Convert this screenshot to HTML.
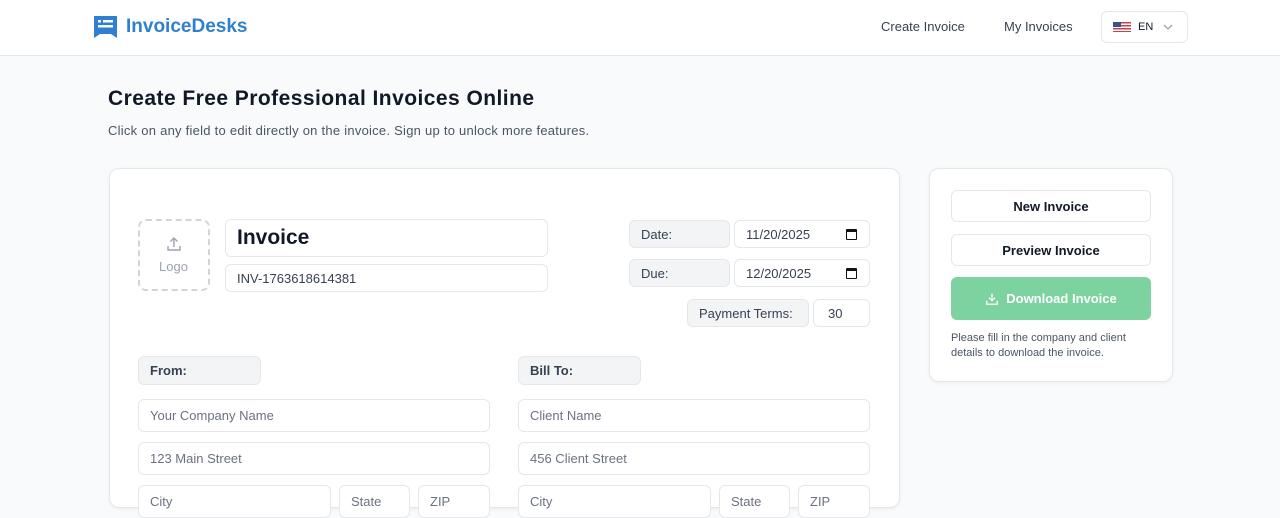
<!DOCTYPE html><html><head><style>
*{box-sizing:border-box;margin:0;padding:0}
body{width:1280px;height:500px;overflow:hidden;background:#f9fafb;font-family:"Liberation Sans",sans-serif;color:#111827;position:relative}
.a{position:absolute}
.hdr{left:0;top:0;width:1280px;height:56px;background:#fff;border-bottom:1px solid #e5e7eb}
.f{position:absolute;border:1px solid #e5e7eb;border-radius:6px;background:#fff;font-size:13px;color:#374151;padding-left:11px;display:flex;align-items:center}
.g{position:absolute;background:#f3f4f6;border:1px solid #e5e7eb;border-radius:6px;font-size:13px;font-weight:bold;color:#374151;padding-left:11px;display:flex;align-items:center}
.ph{color:#6b7280}
.btn{position:absolute;left:951px;width:200px;height:32px;border:1px solid #e5e7eb;border-radius:6px;background:#fff;font-size:13px;font-weight:bold;display:flex;align-items:center;justify-content:center;color:#111827}
</style></head><body>
<div class="a hdr"></div>
<svg class="a" style="left:94px;top:16px" width="23" height="22" viewBox="0 0 23 22"><path d="M0 0h23v22l-6-4H6l-6 4z" fill="#2f80d1"/><rect x="4" y="4" width="3" height="2.5" fill="#fff"/><rect x="9" y="4" width="10" height="2.5" fill="#fff"/><rect x="4" y="9" width="15" height="2.5" fill="#fff"/></svg>
<div class="a" style="left:126px;top:16px;font-size:19px;font-weight:bold;color:#2f80d1">InvoiceDesks</div>
<div class="a" style="left:881px;top:19px;font-size:13px;color:#374151">Create Invoice</div>
<div class="a" style="left:1004px;top:19px;font-size:13px;color:#374151">My Invoices</div>
<div class="a" style="left:1101px;top:11px;width:87px;height:32px;border:1px solid #e5e7eb;border-radius:6px;background:#fff"></div>
<div class="a" style="left:1113px;top:22px;width:18px;height:10px;background:repeating-linear-gradient(#c8404c 0 1.5px,#fff 1.5px 3px)"><div style="width:8px;height:5px;background:#3c4f8f"></div></div>
<div class="a" style="left:1138px;top:21px;font-size:11px;color:#111827">EN</div>
<svg class="a" style="left:1163px;top:24px" width="10" height="7"><path d="M1 1l4 4 4-4" stroke="#9ca3af" fill="none" stroke-width="1.3"/></svg>
<div class="a" style="left:108px;top:87px;font-size:21px;font-weight:bold;letter-spacing:0.45px">Create Free Professional Invoices Online</div>
<div class="a" style="left:108px;top:123px;font-size:13px;color:#4b5563;letter-spacing:0.25px">Click on any field to edit directly on the invoice. Sign up to unlock more features.</div>
<div class="a" style="left:109px;top:168px;width:791px;height:340px;background:#fff;border:1px solid #e5e7eb;border-radius:10px;box-shadow:0 1px 3px rgba(0,0,0,.06)"></div>
<div class="a" style="left:929px;top:168px;width:244px;height:214px;background:#fff;border:1px solid #e5e7eb;border-radius:10px;box-shadow:0 1px 3px rgba(0,0,0,.06)"></div>
<div class="a" style="left:138px;top:219px;width:72px;height:72px;border:2px dashed #d1d5db;border-radius:8px"></div>
<svg class="a" style="left:166px;top:236px" width="16" height="16" viewBox="0 0 16 16" fill="none" stroke="#9ca3af" stroke-width="1.4"><path d="M8 11V2M4.5 5.5L8 2l3.5 3.5M2 10v4h12v-4"/></svg>
<div class="a" style="left:159px;top:259px;font-size:13px;color:#9ca3af">Logo</div>
<div class="f" style="left:225px;top:219px;width:323px;height:38px;font-size:21px;font-weight:bold;color:#111827">Invoice</div>
<div class="f" style="left:225px;top:264px;width:323px;height:28px">INV-1763618614381</div>
<div class="g" style="left:629px;top:220px;width:101px;height:28px;font-weight:normal">Date:</div>
<div class="f" style="left:734px;top:220px;width:136px;height:28px">11/20/2025<span style="position:absolute;right:12px;width:11px;height:11px;border:1.5px solid #111;border-top-width:3px;border-radius:1px"></span></div>
<div class="g" style="left:629px;top:259px;width:101px;height:28px;font-weight:normal">Due:</div>
<div class="f" style="left:734px;top:259px;width:136px;height:28px">12/20/2025<span style="position:absolute;right:12px;width:11px;height:11px;border:1.5px solid #111;border-top-width:3px;border-radius:1px"></span></div>
<div class="g" style="left:687px;top:299px;width:122px;height:28px;font-weight:normal">Payment Terms:</div>
<div class="f" style="left:813px;top:299px;width:57px;height:28px;padding-left:14px">30</div>
<div class="g" style="left:138px;top:356px;width:123px;height:29px">From:</div>
<div class="g" style="left:518px;top:356px;width:123px;height:29px">Bill To:</div>
<div class="f ph" style="left:138px;top:399px;width:352px;height:33px">Your Company Name</div>
<div class="f ph" style="left:518px;top:399px;width:352px;height:33px">Client Name</div>
<div class="f ph" style="left:138px;top:442px;width:352px;height:33px">123 Main Street</div>
<div class="f ph" style="left:518px;top:442px;width:352px;height:33px">456 Client Street</div>
<div class="f ph" style="left:138px;top:485px;width:193px;height:33px">City</div>
<div class="f ph" style="left:339px;top:485px;width:71px;height:33px">State</div>
<div class="f ph" style="left:418px;top:485px;width:72px;height:33px">ZIP</div>
<div class="f ph" style="left:518px;top:485px;width:193px;height:33px">City</div>
<div class="f ph" style="left:719px;top:485px;width:71px;height:33px">State</div>
<div class="f ph" style="left:798px;top:485px;width:72px;height:33px">ZIP</div>
<div class="btn" style="top:190px">New Invoice</div>
<div class="btn" style="top:234px">Preview Invoice</div>
<div class="btn" style="top:277px;height:43px;background:#7dd3a0;border-color:#7dd3a0;color:#fff">
<svg width="14" height="14" viewBox="0 0 16 16" fill="none" stroke="#fff" stroke-width="1.5" style="margin-right:7px"><path d="M8 2v8M4.5 6.5L8 10l3.5-3.5M2 10v4h12v-4"/></svg>Download Invoice</div>
<div class="a" style="left:951px;top:331px;font-size:11px;line-height:15px;color:#4b5563;width:205px">Please fill in the company and client details to download the invoice.</div>
</body></html>
